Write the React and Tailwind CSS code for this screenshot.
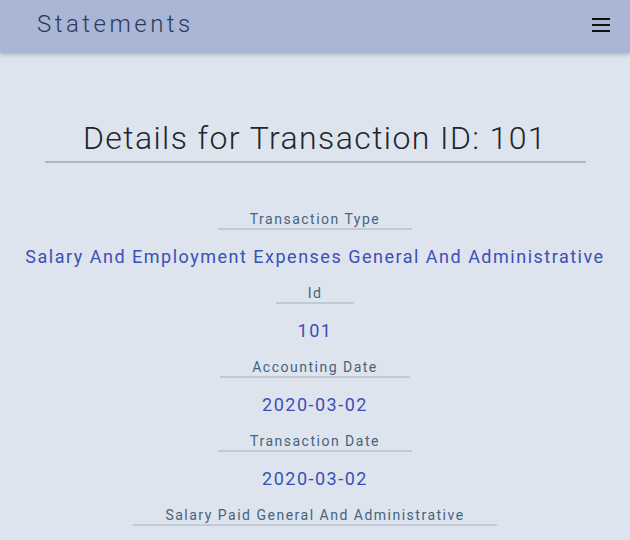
const fields = [
  { label: 'Transaction Type', value: 'Salary And Employment Expenses General And Administrative' },
  { label: 'Id', value: '101' },
  { label: 'Accounting Date', value: '2020-03-02' },
  { label: 'Transaction Date', value: '2020-03-02' },
  { label: 'Salary Paid General And Administrative', value: '' },
];

function Field({ label, value }) {
  return (
    <div className="flex flex-col items-center">
      <div className="px-8 border-b-2 border-[#c2cad6] text-[14px] leading-[18px] tracking-[1.5px] text-[#46637f]">
        {label}
      </div>
      {value && (
        <div className="mt-[15px] mb-[15px] text-[18px] leading-[24px] tracking-[1.5px] text-[#3b4fb8] whitespace-nowrap">
          {value}
        </div>
      )}
    </div>
  );
}

export default function App() {
  return (
    <div className="min-h-[540px] bg-[#dde4ed] font-['Roboto',sans-serif]">
      <header className="h-[53px] bg-[#a9b6d6] flex items-center justify-between pl-[37px] pr-[20px] pb-[5px] shadow-[0_2px_4px_rgba(0,0,0,0.2)]">
        <h1 className="text-[24px] font-light tracking-[3.5px] text-[#2c3a58]">Statements</h1>
        <button className="flex flex-col gap-[4px] w-[18px] mt-[1px]">
          <span className="h-[2px] bg-[#111]" />
          <span className="h-[2px] bg-[#111]" />
          <span className="h-[2px] bg-[#111]" />
        </button>
      </header>
      <main className="flex flex-col items-center pt-[65px]">
        <h2 className="w-[541px] text-center text-[32px] leading-[40px] font-light tracking-[1.4px] text-[#1f2630] border-b-2 border-[#a7b9c2] pb-[3px]">
          Details for Transaction ID: 101
        </h2>
        <div className="mt-[47px] flex flex-col items-center">
          {fields.map((f) => (
            <Field key={f.label} label={f.label} value={f.value} />
          ))}
        </div>
      </main>
    </div>
  );
}
